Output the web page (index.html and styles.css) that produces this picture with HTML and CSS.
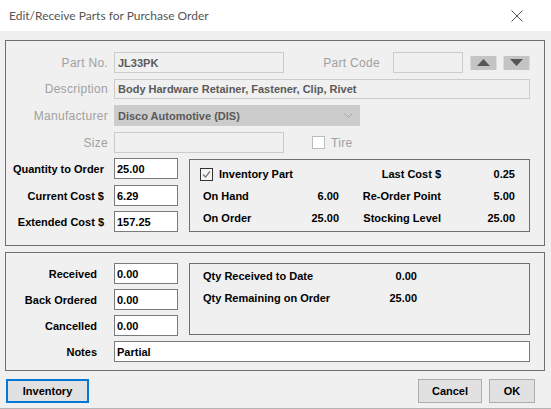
FILE: index.html
```html
<!DOCTYPE html>
<html lang="en">
<head>
    <meta charset="UTF-8">
    <title>Edit/Receive Parts for Purchase Order</title>
    <link rel="stylesheet" href="styles.css">
</head>
<body>
    <div class="titlebar">
        <span class="title">Edit/Receive Parts for Purchase Order</span>
        <svg class="close" width="12" height="12" viewBox="0 0 12 12">
            <path d="M0.5 0.5 L11.5 11.5 M11.5 0.5 L0.5 11.5" stroke="#555" stroke-width="1" fill="none"/>
        </svg>
    </div>

    <div class="dialog">
        <!-- Part details -->
        <div class="group group-part">
            <div class="row">
                <span class="lbl lbl-off lbl-top">Part No.</span>
                <input class="field field-off w-short" value="JL33PK" readonly>
                <span class="lbl lbl-off lbl-code">Part Code</span>
                <input class="field field-off w-code" value="" readonly>
                <span class="spin spin-up">
                    <svg width="13" height="7" viewBox="0 0 13 7"><path d="M0 7 L6.5 0 L13 7 Z" fill="#555"/></svg>
                </span>
                <span class="spin spin-down">
                    <svg width="13" height="7" viewBox="0 0 13 7"><path d="M0 0 L13 0 L6.5 7 Z" fill="#555"/></svg>
                </span>
            </div>
            <div class="row row-desc">
                <span class="lbl lbl-off lbl-top">Description</span>
                <input class="field field-off w-long" value="Body Hardware Retainer, Fastener, Clip, Rivet" readonly>
            </div>
            <div class="row row-mfr">
                <span class="lbl lbl-off lbl-top">Manufacturer</span>
                <div class="select-off">
                    <span>Disco Automotive (DIS)</span>
                    <svg width="9" height="5" viewBox="0 0 9 5"><path d="M0.5 0.5 L4.5 4.5 L8.5 0.5" stroke="#a8a8a8" fill="none"/></svg>
                </div>
            </div>
            <div class="row row-size">
                <span class="lbl lbl-off lbl-top">Size</span>
                <input class="field field-off w-short" value="" readonly>
                <span class="check check-off"></span>
                <span class="lbl-off tire">Tire</span>
            </div>

            <div class="lower">
                <div class="col">
                    <div class="row">
                        <span class="lbl lbl-qty">Quantity to Order</span>
                        <input class="field w-num" value="25.00">
                    </div>
                    <div class="row">
                        <span class="lbl lbl-qty">Current Cost $</span>
                        <input class="field w-num" value="6.29">
                    </div>
                    <div class="row">
                        <span class="lbl lbl-qty">Extended Cost $</span>
                        <input class="field w-num" value="157.25">
                    </div>
                </div>
                <div class="box box-inv">
                    <div class="inv-check">
                        <span class="check check-on">
                            <svg width="11" height="11" viewBox="0 0 11 11"><path d="M2 5.5 L4.5 8 L9 2.5" stroke="#777" stroke-width="1.2" fill="none"/></svg>
                        </span>
                        <span>Inventory Part</span>
                    </div>
                    <span class="num">Last Cost $</span>
                    <span class="num">0.25</span>
                    <span>On Hand</span>
                    <span class="num">6.00</span>
                    <span class="num">Re-Order Point</span>
                    <span class="num">5.00</span>
                    <span>On Order</span>
                    <span class="num">25.00</span>
                    <span class="num">Stocking Level</span>
                    <span class="num">25.00</span>
                </div>
            </div>
        </div>

        <!-- Receiving -->
        <div class="group group-recv">
            <div class="recv-top">
                <div class="col">
                    <div class="row">
                        <span class="lbl lbl-recv">Received</span>
                        <input class="field w-num" value="0.00">
                    </div>
                    <div class="row">
                        <span class="lbl lbl-recv">Back Ordered</span>
                        <input class="field w-num" value="0.00">
                    </div>
                    <div class="row">
                        <span class="lbl lbl-recv">Cancelled</span>
                        <input class="field w-num" value="0.00">
                    </div>
                </div>
                <div class="box box-qty">
                    <span>Qty Received to Date</span>
                    <span class="num">0.00</span>
                    <span>Qty Remaining on Order</span>
                    <span class="num">25.00</span>
                </div>
            </div>
            <div class="row row-notes">
                <span class="lbl lbl-recv">Notes</span>
                <input class="field w-long" value="Partial">
            </div>
        </div>

        <div class="footer">
            <button class="btn btn-inv">Inventory</button>
            <div class="footer-right">
                <button class="btn btn-cancel">Cancel</button>
                <button class="btn btn-ok">OK</button>
            </div>
        </div>
    </div>
</body>
</html>
```

FILE: styles.css
```css
body {
    margin: 0;
    padding: 0;
    width: 551px;
    height: 409px;
    box-sizing: border-box;
    overflow: hidden;
    background-color: #f0f0f0;
    border-bottom: 1px solid #b4b4b4;
    font-family: "Liberation Sans", Arial, sans-serif;
    font-size: 11px;
    font-weight: bold;
    color: #000;
}
.titlebar {
    height: 31px;
    background-color: #fff;
    display: flex;
    align-items: center;
    justify-content: space-between;
    padding-left: 9px;
}
.title {
    font-family: "Lato", sans-serif;
    font-weight: normal;
    font-size: 12px;
    color: #555;
}
.close {
    margin-right: 28px;
}
.dialog {
    padding: 9px 0 0 5px;
    width: 540px;
}
.group {
    border: 1px solid #6e6e6e;
    box-sizing: border-box;
    width: 540px;
}
.group-part {
    height: 206px;
    padding-top: 11px;
}
.group-recv {
    height: 119px;
    margin-top: 6px;
    padding-top: 10px;
}
.row {
    display: flex;
    align-items: center;
    height: 21px;
}
.row-desc { margin-top: 6px; height: 20px; }
.row-mfr { margin-top: 6px; }
.row-size { margin-top: 6px; }
.lbl {
    text-align: right;
    white-space: nowrap;
}
.lbl-off {
    color: #a0a0a0;
    font-weight: normal;
    font-size: 12px;
    letter-spacing: 0.3px;
}
.lbl-top {
    width: 102px;
    margin-right: 6px;
}
.lbl-code {
    width: 96px;
    margin-right: 13px;
}
.lbl-qty {
    width: 98px;
    margin-right: 10px;
}
.lbl-recv {
    width: 91px;
    margin-right: 17px;
}
.field {
    box-sizing: border-box;
    height: 21px;
    border: 1px solid #7a7a7a;
    background-color: #fff;
    padding: 0 2px;
    margin: 0;
    font-family: "Liberation Sans", Arial, sans-serif;
    font-size: 11px;
    font-weight: bold;
    color: #000;
    outline: none;
}
.row-desc .field { height: 20px; }
.field-off {
    background-color: #f0f0f0;
    border-color: #cccccc;
    color: #5a5a5a;
    padding-left: 3px;
}
.w-short { width: 170px; }
.w-code { width: 70px; }
.w-long { width: 416px; }
.w-num { width: 64px; }
.spin {
    box-sizing: border-box;
    width: 27px;
    height: 14px;
    background-color: #c4c4c4;
    border-left: 1px solid #dcdcdc;
    border-right: 1px solid #dcdcdc;
    display: flex;
    align-items: center;
    justify-content: center;
}
.spin-up { margin-left: 7px; }
.spin-down { margin-left: 6px; }
.select-off {
    box-sizing: border-box;
    width: 246px;
    height: 21px;
    background-color: #cccccc;
    display: flex;
    align-items: center;
    justify-content: space-between;
    padding: 0 7px 0 4px;
    color: #5a5a5a;
}
.check {
    box-sizing: border-box;
    width: 13px;
    height: 13px;
    display: flex;
    align-items: center;
    justify-content: center;
}
.check-off {
    border: 1px solid #bcbcbc;
    background-color: #fff;
    margin-left: 28px;
}
.check-on {
    border: 1px solid #333;
    background-color: #f4f4f4;
}
.tire {
    margin-left: 6px;
}
.lower {
    display: flex;
    align-items: flex-start;
    margin-top: 5px;
}
.col {
    display: flex;
    flex-direction: column;
    gap: 5px;
}
.lower .col .row + .row {
    margin-top: 1px;
}
.lower .col .row:last-child {
    margin-top: 0;
}
.box {
    box-sizing: border-box;
    width: 341px;
    border: 1px solid #6e6e6e;
    margin-left: 11px;
    display: grid;
    align-items: center;
    grid-auto-rows: 22px;
}
.box-inv {
    height: 73px;
    margin-top: 1px;
    padding: 3px 0 0 13px;
    grid-template-columns: 80px 56px 102px 74px;
}
.inv-check {
    grid-column: 1 / 3;
    display: flex;
    align-items: center;
    gap: 6px;
    margin-left: -3px;
}
.num {
    text-align: right;
    white-space: nowrap;
}
.recv-top {
    display: flex;
    align-items: flex-start;
}
.box-qty {
    height: 72px;
    padding: 1px 0 0 13px;
    grid-template-columns: 150px 64px;
    align-content: start;
}
.row-notes {
    margin-top: 5px;
}
.footer {
    display: flex;
    justify-content: space-between;
    align-items: center;
    margin-top: 8px;
    padding: 0 10px 0 1px;
}
.footer-right {
    display: flex;
    gap: 7px;
}
.btn {
    box-sizing: border-box;
    height: 24px;
    background-color: #e1e1e1;
    border: 1px solid #adadad;
    font-family: "Liberation Sans", Arial, sans-serif;
    font-size: 11px;
    font-weight: bold;
    color: #000;
    padding: 0;
    margin: 0;
}
.btn-inv {
    width: 83px;
    border: 2px solid #0078d7;
}
.btn-cancel { width: 64px; }
.btn-ok { width: 46px; }
```
